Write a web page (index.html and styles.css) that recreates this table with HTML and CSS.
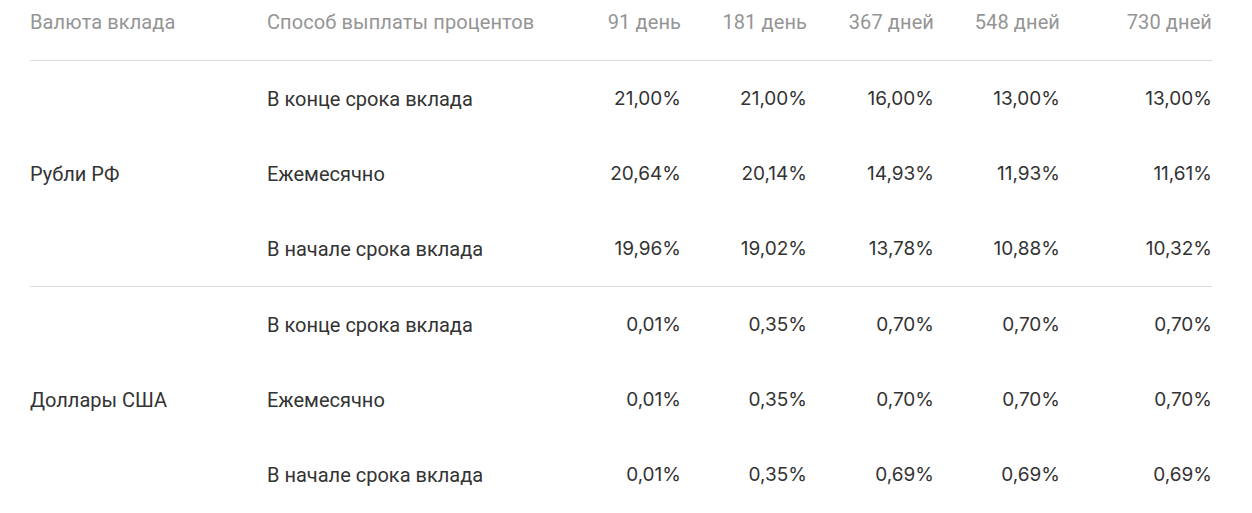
FILE: index.html
```html
<!DOCTYPE html>
<html lang="ru">
<head>
<meta charset="utf-8">
<link rel="stylesheet" href="styles.css">
</head>
<body>
<div class="table">
  <div class="row head">
    <div class="cell">Валюта вклада</div>
    <div class="cell">Способ выплаты процентов</div>
    <div class="cell num">91 день</div>
    <div class="cell num">181 день</div>
    <div class="cell num">367 дней</div>
    <div class="cell num">548 дней</div>
    <div class="cell num">730 дней</div>
  </div>
  <div class="group">
    <div class="cur">Рубли РФ</div>
    <div class="rows">
      <div class="row"><div class="cell">В конце срока вклада</div><div class="cell num">21,00%</div><div class="cell num">21,00%</div><div class="cell num">16,00%</div><div class="cell num">13,00%</div><div class="cell num">13,00%</div></div>
      <div class="row"><div class="cell">Ежемесячно</div><div class="cell num">20,64%</div><div class="cell num">20,14%</div><div class="cell num">14,93%</div><div class="cell num">11,93%</div><div class="cell num">11,61%</div></div>
      <div class="row"><div class="cell">В начале срока вклада</div><div class="cell num">19,96%</div><div class="cell num">19,02%</div><div class="cell num">13,78%</div><div class="cell num">10,88%</div><div class="cell num">10,32%</div></div>
    </div>
  </div>
  <div class="group">
    <div class="cur">Доллары США</div>
    <div class="rows">
      <div class="row"><div class="cell">В конце срока вклада</div><div class="cell num">0,01%</div><div class="cell num">0,35%</div><div class="cell num">0,70%</div><div class="cell num">0,70%</div><div class="cell num">0,70%</div></div>
      <div class="row"><div class="cell">Ежемесячно</div><div class="cell num">0,01%</div><div class="cell num">0,35%</div><div class="cell num">0,70%</div><div class="cell num">0,70%</div><div class="cell num">0,70%</div></div>
      <div class="row"><div class="cell">В начале срока вклада</div><div class="cell num">0,01%</div><div class="cell num">0,35%</div><div class="cell num">0,69%</div><div class="cell num">0,69%</div><div class="cell num">0,69%</div></div>
    </div>
  </div>
</div>
</body>
</html>
```
FILE: styles.css
```css
html, body {
  margin: 0;
  padding: 0;
  background: #fff;
}
body {
  font-family: Roboto, "Liberation Sans", sans-serif;
  font-size: 20px;
  line-height: 24px;
  color: #333;
}
.table {
  width: 1182px;
  margin-left: 30px;
}
.row {
  display: grid;
  grid-template-columns: 288px 126px 126px 127px 126px 152px;
  align-items: center;
  height: 75px;
}
.rows .num {
  font-family: Inter, Roboto, sans-serif;
  font-size: 19px;
}
.head {
  grid-template-columns: 237px 288px 126px 126px 127px 126px 152px;
  height: 60px;
  align-items: start;
  color: #959595;
  letter-spacing: 0.1px;
}
.head .cell {
  padding-top: 10px;
}
.group {
  display: flex;
  border-top: 1px solid #dcdcdc;
}
.cur {
  width: 237px;
  display: flex;
  align-items: center;
}
.rows {
  flex: 1;
}
.num {
  text-align: right;
}
```
